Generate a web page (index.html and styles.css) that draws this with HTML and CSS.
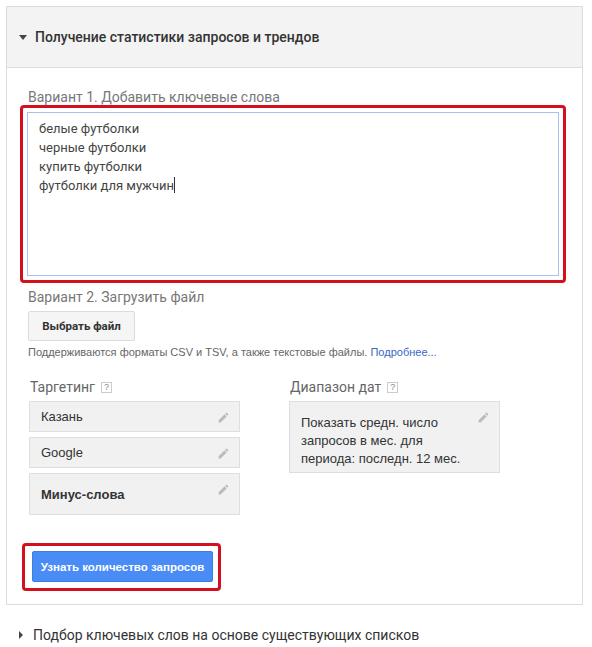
FILE: index.html
```html
<!DOCTYPE html>
<html lang="ru">
<head>
<meta charset="utf-8">
<link rel="stylesheet" href="styles.css">
</head>
<body>
<div class="panel">
  <div class="panel-head">
    <span class="tri-down"></span>
    <span class="head-title">Получение статистики запросов и трендов</span>
  </div>
  <div class="panel-body">
    <div class="label">Вариант 1. Добавить ключевые слова</div>
    <div class="red-frame">
      <div class="textarea">
        <div>белые футболки</div>
        <div>черные футболки</div>
        <div>купить футболки</div>
        <div>футболки для мужчин<span class="caret"></span></div>
      </div>
    </div>
    <div class="label label2">Вариант 2. Загрузить файл</div>
    <button class="file-btn">Выбрать файл</button>
    <div class="hint">Поддерживаются форматы CSV и TSV, а также текстовые файлы. <span class="link">Подробнее...</span></div>
    <div class="cols">
      <div class="col">
        <div class="col-label">Таргетинг <span class="help">?</span></div>
        <div class="chip">Казань<svg class="pen" viewBox="0 0 24 24"><path d="M3 17.25V21h3.75L17.81 9.94l-3.75-3.75L3 17.25zM20.71 7.04a1 1 0 0 0 0-1.41l-2.34-2.34a1 1 0 0 0-1.41 0l-1.83 1.83 3.75 3.75 1.83-1.83z"/></svg></div>
        <div class="chip">Google<svg class="pen" viewBox="0 0 24 24"><path d="M3 17.25V21h3.75L17.81 9.94l-3.75-3.75L3 17.25zM20.71 7.04a1 1 0 0 0 0-1.41l-2.34-2.34a1 1 0 0 0-1.41 0l-1.83 1.83 3.75 3.75 1.83-1.83z"/></svg></div>
        <div class="chip chip-tall"><b>Минус-слова</b><svg class="pen" viewBox="0 0 24 24"><path d="M3 17.25V21h3.75L17.81 9.94l-3.75-3.75L3 17.25zM20.71 7.04a1 1 0 0 0 0-1.41l-2.34-2.34a1 1 0 0 0-1.41 0l-1.83 1.83 3.75 3.75 1.83-1.83z"/></svg></div>
      </div>
      <div class="col">
        <div class="col-label">Диапазон дат <span class="help">?</span></div>
        <div class="chip chip-date">Показать средн. число<br>запросов в мес. для<br>периода: последн. 12 мес.<svg class="pen" viewBox="0 0 24 24"><path d="M3 17.25V21h3.75L17.81 9.94l-3.75-3.75L3 17.25zM20.71 7.04a1 1 0 0 0 0-1.41l-2.34-2.34a1 1 0 0 0-1.41 0l-1.83 1.83 3.75 3.75 1.83-1.83z"/></svg></div>
      </div>
    </div>
    <div class="red-frame red-btn">
      <button class="primary">Узнать количество запросов</button>
    </div>
  </div>
</div>
<div class="collapsed">
  <span class="tri-right"></span>
  <span>Подбор ключевых слов на основе существующих списков</span>
</div>
</body>
</html>
```

FILE: styles.css
```css
html, body {
  margin: 0;
  padding: 0;
  background: #fff;
}
body {
  font-family: "Liberation Sans", Arial, sans-serif;
  color: #333;
  padding-top: 6px;
}
.panel {
  margin-left: 6px;
  width: 575px;
  border: 1px solid #dcdcdc;
}
.panel-head {
  background: #f3f3f3;
  border-bottom: 1px solid #dcdcdc;
  display: flex;
  align-items: center;
  padding-left: 12px;
  box-sizing: border-box;
  height: 61px;
}
.tri-down {
  width: 0;
  height: 0;
  border-left: 4px solid transparent;
  border-right: 4px solid transparent;
  border-top: 5px solid #444;
  margin-right: 8px;
}
.head-title {
  font-family: Roboto, sans-serif;
  font-weight: 500;
  font-size: 14px;
  color: #333;
}
.panel-body {
  padding: 21px 16px 13px 13px;
}
.label {
  font-family: Roboto, sans-serif;
  font-size: 14px;
  line-height: 16px;
  color: #777;
  margin-left: 8px;
}
.red-frame {
  border: 3px solid #d5101e;
  border-radius: 4px;
  padding: 4px 4px;
}
.textarea {
  height: 164px;
  box-sizing: border-box;
  border: 1px solid #a9c1e8;
  padding: 6px 11px;
  font-family: Roboto, sans-serif;
  font-size: 13px;
  line-height: 19px;
  color: #444;
}
.caret {
  display: inline-block;
  width: 1px;
  height: 16px;
  background: #333;
  vertical-align: -3px;
}
.label2 {
  margin-top: 6px;
}
.file-btn {
  display: block;
  margin: 6px 0 0 8px;
  width: 107px;
  height: 30px;
  border: 1px solid #dcdcdc;
  border-radius: 2px;
  background: #f5f5f5;
  font-family: Roboto, sans-serif;
  font-weight: 700;
  font-size: 11.5px;
  color: #333;
  padding: 0;
}
.hint {
  margin: 5px 0 0 8px;
  font-size: 11px;
  line-height: 12px;
  color: #666;
}
.link {
  color: #3767c8;
}
.cols {
  display: flex;
  gap: 49px;
  margin: 21px 0 0 9px;
}
.col {
  width: 211px;
  display: flex;
  flex-direction: column;
  gap: 5px;
}
.col-label {
  font-family: Roboto, sans-serif;
  font-size: 14px;
  line-height: 16px;
  color: #666;
  display: flex;
  align-items: center;
  gap: 6px;
  margin-left: 1px;
  margin-bottom: 1px;
}
.help {
  display: inline-block;
  width: 11px;
  height: 11px;
  box-sizing: border-box;
  border: 1px solid #ccc;
  font-family: "Liberation Sans", sans-serif;
  font-size: 9px;
  line-height: 9px;
  text-align: center;
  color: #888;
}
.chip {
  position: relative;
  height: 31px;
  box-sizing: border-box;
  background: #f1f1f1;
  border: 1px solid #dedede;
  font-size: 13px;
  color: #333;
  display: flex;
  align-items: center;
  padding-left: 11px;
}
.chip-tall {
  height: 42px;
}
.chip-date {
  height: 72px;
  display: block;
  padding: 12px 0 0 11px;
  line-height: 18px;
}
.pen {
  position: absolute;
  top: 9px;
  right: 9px;
  width: 13px;
  height: 13px;
  fill: #bbb;
}
.red-btn {
  display: inline-block;
  margin: 28px 0 0 2px;
  padding: 5px 5px 6px 7px;
}
.primary {
  display: block;
  width: 181px;
  height: 31px;
  border: 1px solid #3c7de6;
  border-radius: 2px;
  background: #4a8cf5;
  color: #fff;
  font-family: "Liberation Sans", Arial, sans-serif;
  font-weight: 700;
  font-size: 11.5px;
  padding: 0;
}
.collapsed {
  display: flex;
  align-items: center;
  margin: 22px 0 0 19px;
  font-family: Roboto, sans-serif;
  font-size: 14px;
  color: #333;
}
.tri-right {
  width: 0;
  height: 0;
  border-top: 4px solid transparent;
  border-bottom: 4px solid transparent;
  border-left: 4px solid #444;
  margin-right: 10px;
}
```
